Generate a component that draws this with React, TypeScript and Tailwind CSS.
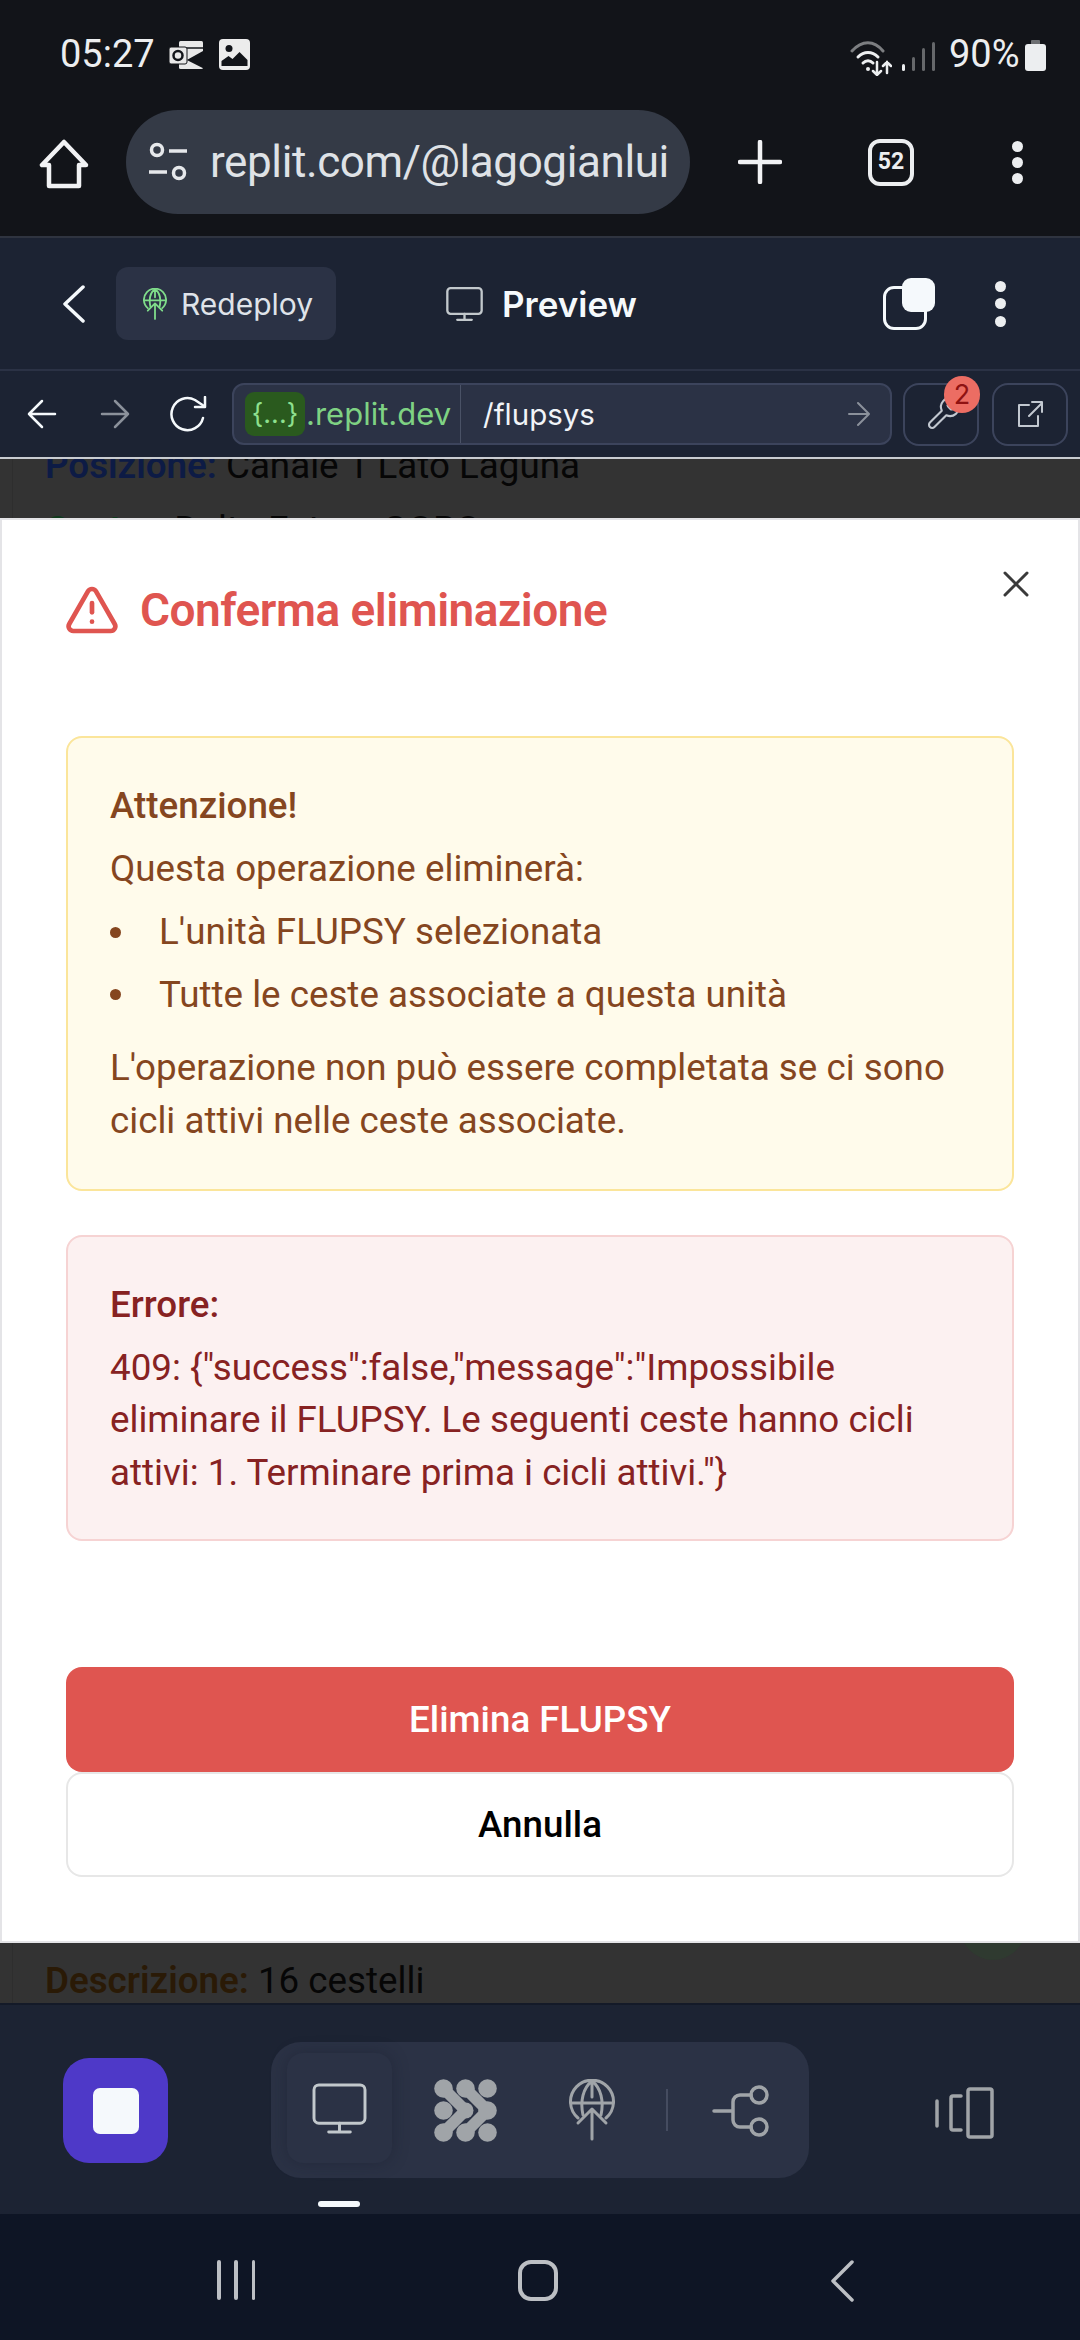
import React from "react";
import { TriangleAlert, Wrench } from "lucide-react";

const ROBOTO = "font-['Roboto',sans-serif]";
const PLEX = "font-['Inter',sans-serif]";

function Dots({ className = "" }: { className?: string }) {
  return (
    <div className={`flex flex-col items-center justify-between ${className}`}>
      <div className="w-[11px] h-[11px] rounded-full bg-[#eceef0]" />
      <div className="w-[11px] h-[11px] rounded-full bg-[#eceef0]" />
      <div className="w-[11px] h-[11px] rounded-full bg-[#eceef0]" />
    </div>
  );
}

function Monitor({ w, h, color, sw = 3 }: { w: number; h: number; color: string; sw?: number }) {
  return (
    <svg width={w} height={h} viewBox="0 0 56 52" fill="none" stroke={color} strokeWidth={sw} strokeLinecap="round" strokeLinejoin="round">
      <rect x="2" y="2" width="52" height="39" rx="5" />
      <path d="M28 41v9M17 50h22" />
    </svg>
  );
}

function GlobeUp({ w, h, color, sw = 3 }: { w: number; h: number; color: string; sw?: number }) {
  return (
    <svg width={w} height={h} viewBox="0 0 46 62" fill="none" stroke={color} strokeWidth={sw} strokeLinecap="round" strokeLinejoin="round">
      <path d="M9 39A21.5 21.5 0 1 1 37 39" />
      <path d="M2 24h42M14 36C11 22 14 9 23 2c9 7 12 20 9 34M23 2v16" />
      <path d="M23 60V32M9 44l14-14 14 14" />
    </svg>
  );
}

function StatusBar() {
  return (
    <div className={`h-[108px] shrink-0 bg-[#121419] flex items-end pb-[34px] pl-[60px] pr-[34px] ${ROBOTO}`}>
      <span className="text-[38px] leading-[40px] text-[#eceef0] w-[109px]">05:27</span>
      <svg className="mb-[5px]" width="37" height="29" viewBox="0 0 37 29">
        <rect x="10" y="1" width="24" height="28" rx="1.5" fill="#e8e8e8" />
        <path d="M10 8h24" stroke="#121419" strokeWidth="1.5" />
        <path d="M37 12L21 20l16 7" fill="#121419" />
        <path d="M37 11L21 20l16 8" fill="none" stroke="#121419" strokeWidth="3" />
        <rect x="0" y="7" width="18" height="17" rx="2" fill="#e8e8e8" stroke="#121419" strokeWidth="1" />
        <circle cx="9" cy="15.5" r="4.5" fill="none" stroke="#121419" strokeWidth="2.5" />
      </svg>
      <svg className="ml-[13px] mb-[4px]" width="31" height="31" viewBox="0 0 31 31">
        <rect width="31" height="31" rx="4" fill="#ececec" />
        <circle cx="10" cy="9.5" r="3.5" fill="#121419" />
        <path d="M2.5 27v-5l7-5 4 3 7-7 8 8v6z" fill="#121419" />
      </svg>
      <div className="flex-1" />
      <svg className="mb-[-2px]" width="42" height="36" viewBox="0 0 42 36" fill="none" strokeLinecap="round">
        <path d="M2 11C12 0 24 0 33 11" stroke="#7c7e81" strokeWidth="3" />
        <path d="M8 17c6-6 14-6 20 0M13 23c3-3 7-3 10 0" stroke="#eceef0" strokeWidth="3" />
        <circle cx="18" cy="29" r="2" fill="#eceef0" />
        <path d="M27 22v13M23 31l4 4 4-4M37 33V22M33 26l4-4 4 4" stroke="#eceef0" strokeWidth="2.5" />
      </svg>
      <div className="ml-[10px] flex items-end gap-[7px] mb-[3px]">
        <div className="w-[3px] h-[7px] bg-[#eceef0] rounded-sm" />
        <div className="w-[3px] h-[14px] bg-[#66686b] rounded-sm" />
        <div className="w-[3px] h-[23px] bg-[#66686b] rounded-sm" />
        <div className="w-[3px] h-[29px] bg-[#66686b] rounded-sm" />
      </div>
      <span className="ml-[14px] text-[38px] leading-[40px] text-[#eceef0] w-[74px] whitespace-nowrap">90%</span>
      <svg className="ml-[2px] mb-[3px]" width="21" height="31" viewBox="0 0 21 31">
        <rect x="6" y="0" width="9" height="5" rx="1" fill="#6d6f72" />
        <rect x="0" y="4" width="21" height="27" rx="3" fill="#eceef0" />
      </svg>
    </div>
  );
}

function BrowserBar() {
  return (
    <div className="h-[128px] shrink-0 bg-[#121419] flex items-start pt-[2px]">
      <svg className="ml-[39px] mt-[29px]" width="50" height="50" viewBox="0 0 50 50" fill="none" stroke="#f1f2f4" strokeWidth="4.5" strokeLinejoin="round">
        <path d="M25 3L3 26h7v21h30V26h7z" />
      </svg>
      <div className="ml-[37px] w-[564px] h-[104px] rounded-[52px] bg-[#343a46] flex items-center pl-[22px] overflow-hidden">
        <svg width="40" height="40" viewBox="0 0 40 40" fill="none" stroke="#e6e8eb" strokeWidth="3.5">
          <circle cx="9" cy="8" r="5.5" />
          <circle cx="31" cy="31" r="5.5" />
          <path d="M21 9h18M1 30h18" />
        </svg>
        <div className={`ml-[22px] w-[458px] overflow-hidden whitespace-nowrap text-[44px] leading-[50px] tracking-[-0.4px] text-[#dfe2e6] ${ROBOTO}`}>replit.com/@lagogianluigi</div>
      </div>
      <svg className="ml-[48px] mt-[30px]" width="44" height="44" viewBox="0 0 44 44" stroke="#f1f2f4" strokeWidth="4.5" strokeLinecap="round">
        <path d="M22 2v40M2 22h40" />
      </svg>
      <div className={`ml-[86px] mt-[29px] w-[46px] h-[47px] rounded-[12px] border-[4px] border-[#eceef0] flex items-center justify-center text-[23px] font-bold text-[#eceef0] ${ROBOTO}`}>52</div>
      <Dots className="ml-[98px] mt-[31px] h-[43px]" />
    </div>
  );
}

function ReplitHeader() {
  return (
    <div className={`h-[135px] shrink-0 bg-[#1c2333] border-t-[2px] border-[#2f3440] border-b-[2px] border-b-[#2b3245] flex items-center ${PLEX}`}>
      <svg className="ml-[62px]" width="24" height="38" viewBox="0 0 24 38" fill="none" stroke="#f5f9fc" strokeWidth="3.5" strokeLinecap="round" strokeLinejoin="round">
        <path d="M21 2L3 19l18 17" />
      </svg>
      <div className="ml-[30px] w-[220px] h-[73px] rounded-[12px] bg-[#2b3245] flex items-center pl-[27px]">
        <GlobeUp w={24} h={32} color="#7fdc8a" sw={3.5} />
        <span className="ml-[14px] text-[30px] leading-[36px] text-[#dfe3e9]">Redeploy</span>
      </div>
      <div className="ml-[110px]">
        <Monitor w={37} h={36} color="#c2c8cc" sw={3.5} />
      </div>
      <span className="ml-[19px] text-[35px] leading-[40px] font-semibold text-[#f5f9fc]">Preview</span>
      <div className="flex-1" />
      <div className="relative w-[52px] h-[52px] mr-[60px]">
        <div className="absolute left-0 bottom-0 w-[44px] h-[44px] rounded-[11px] border-[3px] border-[#f5f9fc]" />
        <div className="absolute right-0 top-0 w-[33px] h-[34px] rounded-[9px] bg-[#f5f9fc]" />
      </div>
      <Dots className="mr-[74px] h-[46px]" />
    </div>
  );
}

function AddressBar() {
  return (
    <div className={`h-[86px] shrink-0 bg-[#1c2333] flex items-center ${PLEX}`}>
      <svg className="ml-[27px]" width="30" height="30" viewBox="0 0 30 30" fill="none" stroke="#f5f9fc" strokeWidth="2.5" strokeLinecap="round" strokeLinejoin="round">
        <path d="M28 15H2M15 2L2 15l13 13" />
      </svg>
      <svg className="ml-[43px]" width="30" height="30" viewBox="0 0 30 30" fill="none" stroke="#8b919b" strokeWidth="2.5" strokeLinecap="round" strokeLinejoin="round">
        <path d="M2 15h26M15 2l13 13-13 13" />
      </svg>
      <svg className="ml-[40px]" width="38" height="36" viewBox="0 0 38 36" fill="none" stroke="#f5f9fc" strokeWidth="2.5" strokeLinecap="round" strokeLinejoin="round">
        <path d="M33 22A16 16 0 1 1 25 4l9 6" />
        <path d="M35 1v10H25" />
      </svg>
      <div className="ml-[24px] w-[660px] h-[62px] rounded-[12px] bg-[#2b3245] border-[2px] border-[#3c445c] flex items-center pl-[11px] pr-[20px]">
        <div className="w-[60px] h-[44px] shrink-0 rounded-[9px] bg-[#2a5a1e] flex items-center justify-center text-[27px] text-[#8ee08e] whitespace-nowrap">{"{...}"}</div>
        <span className="ml-[1px] text-[31px] text-[#7fd283] w-[154px] shrink-0 whitespace-nowrap overflow-hidden">.replit.dev</span>
        <div className="w-px h-full bg-[#4a5266]" />
        <span className="ml-[22px] text-[29.5px] text-[#f1f4f8]">/flupsys</span>
        <div className="flex-1" />
        <svg width="22" height="26" viewBox="0 0 22 26" fill="none" stroke="#8b919b" strokeWidth="2" strokeLinecap="round" strokeLinejoin="round">
          <path d="M1 13h20M10 2l11 11-11 11" />
        </svg>
      </div>
      <div className="relative ml-[11px] w-[76px] h-[63px] rounded-[16px] border-[2px] border-[#3c445c] flex items-center justify-center">
        <Wrench className="ml-[6px] mb-[2px]" size={36} strokeWidth={1.4} color="#c2c8d0" />
        <div className="absolute right-[-3px] top-[-9px] w-[36px] h-[37px] rounded-full bg-[#ec6d63] flex items-center justify-center text-[27px] leading-none text-[#8f1212]">2</div>
      </div>
      <div className="ml-[13px] w-[76px] h-[63px] rounded-[16px] border-[2px] border-[#3c445c] flex items-center justify-center">
        <svg width="26" height="26" viewBox="0 0 26 26" fill="none" stroke="#c2c8d0" strokeWidth="2" strokeLinecap="round" strokeLinejoin="round">
          <path d="M12 4H2v21h19V15M12 15L25 2M15 1h10v10" />
        </svg>
      </div>
    </div>
  );
}

function Modal() {
  const bodyText = "text-[36.75px] leading-[52.5px]";
  return (
    <div className={`absolute left-0 right-0 top-[59px] h-[1425px] bg-white border-[2px] border-[#e4e4e7] flex flex-col px-[64px] ${ROBOTO}`}>
      <button className="absolute right-[47px] top-[49px]" aria-label="Chiudi">
        <svg width="30" height="30" viewBox="0 0 30 30" stroke="#3a3a3a" strokeWidth="3" strokeLinecap="round">
          <path d="M4 4l22 22M26 4L4 26" />
        </svg>
      </button>
      <div className="flex items-center mt-[60px] h-[60px]">
        <TriangleAlert className="ml-[-2px]" size={56} strokeWidth={2} color="#df5550" />
        <h2 className="ml-[20px] text-[46px] leading-[60px] font-semibold text-[#df5550] tracking-[-0.5px]">Conferma eliminazione</h2>
      </div>
      <div className={`mt-[96px] rounded-[16px] border-[2px] border-[#fbe59a] bg-[#fffbeb] px-[42px] pt-[42px] pb-[42px] text-[#85461f] ${bodyText}`}>
        <p className="font-medium">Attenzione!</p>
        <p className="mt-[10px]">Questa operazione eliminerà:</p>
        <ul className="mt-[11px] flex flex-col gap-[10px]">
          <li className="flex items-center">
            <span className="w-[11px] h-[11px] rounded-full bg-[#85461f] mr-[38px]" />
            <span>L'unità FLUPSY selezionata</span>
          </li>
          <li className="flex items-center">
            <span className="w-[11px] h-[11px] rounded-full bg-[#85461f] mr-[38px]" />
            <span>Tutte le ceste associate a questa unità</span>
          </li>
        </ul>
        <p className="mt-[21px]">L'operazione non può essere completata se ci sono cicli attivi nelle ceste associate.</p>
      </div>
      <div className={`mt-[44px] rounded-[16px] border-[2px] border-[#f6d3d3] bg-[#fcf1f1] px-[42px] pt-[42px] pb-[40px] text-[#872222] ${bodyText}`}>
        <p className="font-medium">Errore:</p>
        <p className="mt-[10px]">409: {'{"success":false,"message":"Impossibile eliminare il FLUPSY. Le seguenti ceste hanno cicli attivi: 1. Terminare prima i cicli attivi."}'}</p>
      </div>
      <button className="mt-[126px] h-[105px] shrink-0 rounded-[16px] bg-[#df5550] text-white text-[36.75px] font-medium">Elimina FLUPSY</button>
      <button className="h-[105px] shrink-0 rounded-[16px] bg-white border-[2px] border-[#e7e7e7] text-black text-[36.75px] font-medium">Annulla</button>
    </div>
  );
}

function PageBehind() {
  return (
    <div className="relative flex-1 min-h-0 bg-[#333333] overflow-hidden border-t-[2px] border-[#c9ccd1]">
      <div className={`absolute left-[45px] top-[-19px] text-[36.75px] leading-[52px] text-[#060606] whitespace-nowrap ${ROBOTO}`}>
        <p><span className="font-semibold text-[#0d1b45]">Posizione:</span> Canale 1 Lato Laguna</p>
        <p className="mt-[12px]"><span className="font-semibold text-[#0f3a1c]">Centro:</span> Delta Futuro GORO</p>
      </div>
      <div className="absolute left-[12px] top-0 bottom-0 w-px bg-[#2e2e2e]" />
      <div className="absolute left-[960px] top-[1435px] w-[66px] h-[66px] rounded-full bg-[#2f3a30]" />
      <Modal />
      <div className={`absolute left-[45px] top-[1496px] text-[36.75px] leading-[52px] text-[#060606] whitespace-nowrap ${ROBOTO}`}>
        <span className="font-semibold text-[#2a1a06]">Descrizione:</span> 16 cestelli
      </div>
    </div>
  );
}

function Molecule() {
  return (
    <svg width="63" height="63" viewBox="0 0 63 63" fill="#a0a4a8">
      <circle cx="9.5" cy="9.5" r="9.3" />
      <circle cx="31.5" cy="9.5" r="9.3" />
      <circle cx="53.5" cy="9.5" r="9.3" />
      <circle cx="9.5" cy="31.5" r="9.3" />
      <circle cx="31.5" cy="31.5" r="8" />
      <circle cx="53.5" cy="31.5" r="9.3" />
      <circle cx="9.5" cy="53.5" r="9.3" />
      <circle cx="31.5" cy="53.5" r="9.3" />
      <circle cx="53.5" cy="53.5" r="9.3" />
      <path d="M9.5 9.5L31.5 31.5 9.5 53.5M31.5 9.5L53.5 31.5 31.5 53.5" fill="none" stroke="#a0a4a8" strokeWidth="11.5" strokeLinejoin="round" />
    </svg>
  );
}

function BottomNav() {
  return (
    <div className="h-[211px] shrink-0 bg-[#1c2333] border-t-[2px] border-[#141a28] flex items-start pt-[37px] relative">
      <div className="ml-[63px] mt-[16px] w-[105px] h-[105px] rounded-[26px] bg-[#4e39c8] flex items-center justify-center">
        <div className="w-[46px] h-[46px] rounded-[7px] bg-[#f5f9fc]" />
      </div>
      <div className="ml-[103px] w-[538px] h-[136px] rounded-[30px] bg-[#2b3245] flex items-center relative">
        <div className="absolute left-[16px] top-[11px] w-[105px] h-[110px] rounded-[16px] bg-[#2b3245] shadow-[0_0_16px_rgba(20,25,40,0.35)] flex items-center justify-center">
          <Monitor w={55} h={51} color="#c2c8cc" sw={3} />
        </div>
        <div className="absolute left-[163px] top-[37px]"><Molecule /></div>
        <div className="absolute left-[298px] top-[37px]"><GlobeUp w={46} h={62} color="#a0a4a8" sw={3} /></div>
        <div className="absolute left-[395px] top-[47px] w-[2px] h-[42px] bg-[#454c60]" />
        <svg className="absolute left-[441px] top-[43px]" width="57" height="52" viewBox="0 0 57 52" fill="none" stroke="#a0a4a8" strokeWidth="3.5" strokeLinecap="round">
          <circle cx="47" cy="10" r="8" />
          <circle cx="47" cy="42" r="8" />
          <path d="M2 26h19M39 10h-11a7 7 0 0 0-7 7v18a7 7 0 0 0 7 7h11" />
        </svg>
      </div>
      <svg className="ml-[126px] mt-[45px]" width="59" height="52" viewBox="0 0 59 52" fill="none" stroke="#a0a4a8" strokeWidth="3.5" strokeLinecap="round" strokeLinejoin="round">
        <rect x="33" y="2" width="24" height="48" rx="2" />
        <path d="M26 9h-8a2 2 0 0 0-2 2v30a2 2 0 0 0 2 2h8M2 14v25" />
      </svg>
      <div className="absolute left-[318px] top-[196px] w-[42px] h-[6px] rounded-full bg-[#f5f9fc]" />
    </div>
  );
}

function AndroidNav() {
  return (
    <div className="h-[126px] shrink-0 bg-[#0e1525] flex items-start pt-[46px]">
      <div className="ml-[217px] w-[38px] h-[40px] flex justify-between">
        <div className="w-[3.5px] h-full rounded bg-[#bcbfc4]" />
        <div className="w-[3.5px] h-full rounded bg-[#bcbfc4]" />
        <div className="w-[3.5px] h-full rounded bg-[#bcbfc4]" />
      </div>
      <div className="ml-[263px] w-[40px] h-[41px] rounded-[13px] border-[4px] border-[#bcbfc4]" />
      <svg className="ml-[272px]" width="25" height="42" viewBox="0 0 25 42" fill="none" stroke="#bcbfc4" strokeWidth="3.5" strokeLinecap="round" strokeLinejoin="round">
        <path d="M22 2L3 21l19 19" />
      </svg>
    </div>
  );
}

export default function App() {
  return (
    <div className="w-[1080px] h-[2340px] flex flex-col overflow-hidden bg-black">
      <StatusBar />
      <BrowserBar />
      <ReplitHeader />
      <AddressBar />
      <PageBehind />
      <BottomNav />
      <AndroidNav />
    </div>
  );
}
